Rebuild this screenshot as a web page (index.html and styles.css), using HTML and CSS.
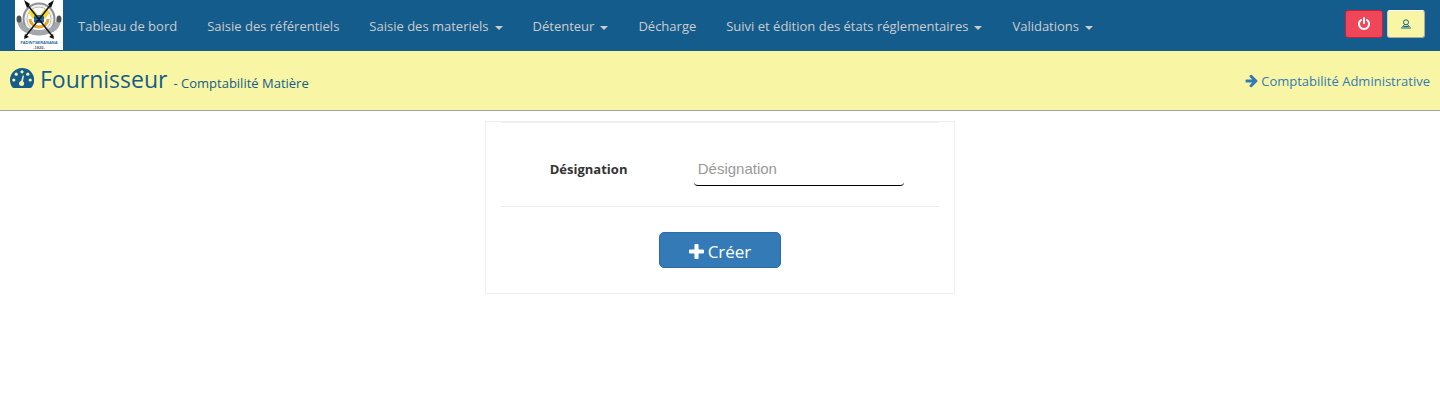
FILE: index.html
```html
<!DOCTYPE html>
<html lang="fr">
<head>
<meta charset="utf-8">
<title>Fournisseur - Comptabilité Matière</title>
<link rel="stylesheet" href="styles.css">
</head>
<body>
<nav class="navbar">
  <a class="brand" href="#">
    <svg viewBox="0 0 48 50" role="img" aria-label="Fadintseranana 1820">
      <rect width="48" height="50" fill="#fff"/>
      <circle cx="24" cy="19" r="15.500" fill="#f0f0f0" stroke="#8e9193" stroke-width="2"/>
      <circle cx="24" cy="19" r="12" fill="#fff" stroke="#b9bcc0" stroke-width="1"/>
      <path d="M2 18c0 12 9 17 22 17s22-5 22-17l-4 0c-2 8-7 12-18 12s-16-4-18-12z" fill="#a4a8ac"/>
      <ellipse cx="4" cy="19" rx="2.500" ry="3.500" fill="#4f5357"/>
      <ellipse cx="44" cy="19" rx="2.500" ry="3.500" fill="#4f5357"/>
      <path d="M15 19a9 8 0 0 0 18 0" fill="none" stroke="#e6a52c" stroke-width="3"/>
      <path d="M13 12l5-3 5 6-5 4zM35 12l-5-3-5 6 5 4z" fill="#f1d92e"/>
      <rect x="19" y="15" width="10" height="8" rx="2" fill="#2f6fae"/>
      <path d="M19 18h10M19 21h10" stroke="#173f70" stroke-width="1"/>
      <path d="M11 3l27 34M37 3L10 37" stroke="#171717" stroke-width="1.500"/>
      <path d="M9 0l6 4-3 4zM39 0l-6 4 3 4zM9 39l1-5 4 3zM39 39l-1-5-4 3z" fill="#111"/>
      <text class="crest-name" x="24" y="44" text-anchor="middle">FADINTSERANANA</text>
      <text class="crest-year" x="24" y="49" text-anchor="middle">-1820-</text>
    </svg>
  </a>
  <ul class="menu">
    <li><a href="#">Tableau de bord</a></li>
    <li><a href="#">Saisie des référentiels</a></li>
    <li><a href="#">Saisie des materiels<span class="caret"></span></a></li>
    <li><a href="#">Détenteur<span class="caret"></span></a></li>
    <li><a href="#">Décharge</a></li>
    <li><a href="#">Suivi et édition des états réglementaires<span class="caret"></span></a></li>
    <li><a href="#">Validations<span class="caret"></span></a></li>
  </ul>
  <div class="actions">
    <button class="btn-icon btn-danger" type="button" aria-label="Déconnexion">
      <svg viewBox="0 0 1792 1792" width="14" height="14"><path fill="currentColor" d="M1664 896q0 156-61 298t-164 245-245 164-298 61-298-61-245-164-164-245-61-298q0-182 80.500-343t226.500-270q43-32 95.500-25t83.500 50q32 42 24.500 94.500t-49.500 84.500q-98 74-151.500 181t-53.500 228q0 104 40.500 198.500t109.500 163.500 163.500 109.500 198.500 40.500 198.500-40.500 163.500-109.500 109.500-163.500 40.500-198.500q0-121-53.500-228t-151.500-181q-42-32-49.500-84.500t24.500-94.500q31-43 84-50t95 25q146 109 226.500 270t80.500 343zm-640-768v640q0 52-38 90t-90 38-90-38-38-90v-640q0-52 38-90t90-38 90 38 38 90z"/></svg>
    </button>
    <button class="btn-icon btn-user" type="button" aria-label="Profil">
      <svg viewBox="0 0 10 10" width="10" height="10" fill="none" stroke="currentColor"><circle cx="5" cy="3.300" r="2.500"/><path d="M3.500 5.500L1.500 8M6.500 5.500L8.500 8M2.500 7.500h5M0 9h10"/></svg>
    </button>
  </div>
</nav>
<header class="page-head">
  <h1 class="title">
    <svg viewBox="0 0 24 20" width="24" height="20" aria-hidden="true">
      <path fill="currentColor" d="M12 0A12 12 0 0 0 0 12c0 2.500.7 4.800 1.900 6.700q.8 1.300 2 1.300h16.200q1.200 0 2-1.300A12 12 0 0 0 12 0z"/>
      <g class="dial"><circle cx="3.800" cy="12" r="1.600"/><circle cx="6.200" cy="6.200" r="1.600"/><circle cx="12" cy="3.800" r="1.600"/><circle cx="17.800" cy="6.200" r="1.600"/><circle cx="20.200" cy="12" r="1.600"/><circle cx="11.600" cy="15.400" r="2.500"/><path d="M10.900 14L12.800 7.300l1.200.4L12.600 15z"/></g>
    </svg>
    <span>Fournisseur</span>
    <small>- Comptabilité Matière</small>
  </h1>
  <a class="switch" href="#">
    <svg viewBox="64 128 1600 1664" width="13" height="14" aria-hidden="true"><path fill="currentColor" d="M1600 960q0 54-37 91l-651 651q-39 37-91 37-51 0-90-37l-75-75q-38-38-38-91t38-91l293-293h-704q-52 0-84.500-37.500t-32.500-90.500v-128q0-53 32.500-90.500t84.500-37.500h704l-293-294q-38-36-38-90t38-90l75-75q38-38 90-38 53 0 91 38l651 651q37 35 37 90z"/></svg>
    <span>Comptabilité Administrative</span>
  </a>
</header>
<main class="content">
  <form class="card">
    <div class="field">
      <label for="designation">Désignation</label>
      <input id="designation" type="text" placeholder="Désignation">
    </div>
    <div class="submit">
      <button class="btn-create" type="button">
        <svg viewBox="192 128 1408 1408" width="15" height="15" aria-hidden="true"><path fill="currentColor" d="M1600 736v192q0 40-28 68t-68 28h-416v416q0 40-28 68t-68 28h-192q-40 0-68-28t-28-68v-416h-416q-40 0-68-28t-28-68v-192q0-40 28-68t68-28h416v-416q0-40 28-68t68-28h192q40 0 68 28t28 68v416h416q40 0 68 28t28 68z"/></svg>
        <span>Créer</span>
      </button>
    </div>
  </form>
</main>
</body>
</html>
```
FILE: styles.css
```css
* { box-sizing: border-box; }
body {
  margin: 0;
  background: #fff;
  color: #333;
  font-family: "Segoe UI", "Open Sans", "Noto Sans", sans-serif;
  font-size: 13px;
  line-height: 20px;
}
a { text-decoration: none; }
button { font-family: inherit; cursor: pointer; }
svg { display: block; flex: none; }

.navbar {
  display: flex;
  align-items: flex-start;
  min-height: 51px;
  padding: 0 15px;
  background: #145c8c;
}
.brand svg { width: 48px; height: 50px; }
.crest-name { font: bold 4px "Liberation Sans", sans-serif; fill: #2c6c98; }
.crest-year { font: bold 4px "Liberation Sans", sans-serif; fill: #555; }
.menu {
  display: flex;
  margin: 0;
  padding: 0;
  list-style: none;
}
.menu a {
  display: flex;
  align-items: center;
  padding: 16px 15px 15px;
  color: #ccc;
  white-space: nowrap;
}
.caret {
  margin: 3px 0 0 6px;
  border-top: 4px solid;
  border-right: 4px solid transparent;
  border-left: 4px solid transparent;
}
.actions {
  display: flex;
  gap: 4px;
  margin-left: auto;
  padding-top: 10px;
}
.btn-icon {
  display: flex;
  align-items: center;
  justify-content: center;
  width: 38px;
  height: 28px;
  padding: 0;
  border: 1px solid;
  border-radius: 3px;
}
.btn-danger { background: #f0465a; border-color: #c81e3c; color: #fff; }
.btn-user { background: #f8f6a4; border-color: #fff #aaa #aaa #ccc; color: #145c8c; }

.page-head {
  display: flex;
  align-items: center;
  justify-content: space-between;
  min-height: 60px;
  padding: 0 10px;
  background: #f8f6a4;
  border-bottom: 1px solid #a3a3a3;
}
.title {
  display: flex;
  align-items: baseline;
  gap: 6px;
  margin: 0;
  color: #145c8c;
  font-size: 23px;
  font-weight: 400;
  line-height: 30px;
}
.title small { font-size: 13px; }
.dial { fill: #f8f6a4; }
.switch {
  display: flex;
  align-items: center;
  gap: 3px;
  color: #337ab7;
}

.content {
  display: flex;
  justify-content: center;
  padding: 10px 15px;
}
.card {
  width: 33.333%;
  min-width: 320px;
  padding: 0 15px 25px;
  border: 1px solid #eee;
}
.field {
  display: grid;
  grid-template-columns: 40% 48%;
  column-gap: 4%;
  align-items: center;
  padding: 29px 0 20px;
  border-top: 1px solid #eee;
  border-bottom: 1px solid #eee;
}
.field label {
  text-align: center;
  font-weight: 700;
}
.field input {
  width: 100%;
  height: 34px;
  padding: 0 4px;
  border: 0;
  border-bottom: 1px solid #000;
  border-radius: 4px;
  background: #fff;
  color: #333;
  font-family: "Liberation Sans", Arial, sans-serif;
  font-size: 15px;
}
.field input::placeholder { color: #999; opacity: 1; }
.submit {
  display: flex;
  justify-content: center;
  padding-top: 25px;
}
.btn-create {
  display: flex;
  align-items: center;
  justify-content: center;
  gap: 4px;
  min-width: 122px;
  height: 36px;
  padding: 2px 12px 0;
  border: 1px solid #2e6da4;
  border-radius: 5px;
  background: #337ab7;
  color: #fff;
  font-size: 17px;
}
```
